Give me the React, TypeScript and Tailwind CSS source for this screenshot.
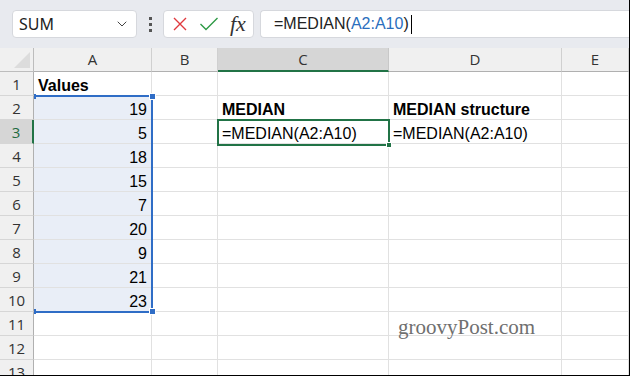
import { ChevronDown } from "lucide-react";

const COLS = ["A", "B", "C", "D", "E"];
const ROWS = Array.from({ length: 13 }, (_, i) => i + 1);
const VALUES = [19, 5, 18, 15, 7, 20, 9, 21, 23];

const cellFont = { fontFamily: '"Liberation Sans", Arial, sans-serif' };

type Cell = { text: string; bold?: boolean; right?: boolean };

const getCell = (row: number, col: string): Cell | null => {
  if (col === "A" && row === 1) return { text: "Values", bold: true };
  if (col === "A" && row >= 2 && row <= 10)
    return { text: `${VALUES[row - 2]}`, right: true };
  if (col === "C" && row === 2) return { text: "MEDIAN", bold: true };
  if (col === "D" && row === 2) return { text: "MEDIAN structure", bold: true };
  if ((col === "C" || col === "D") && row === 3)
    return { text: "=MEDIAN(A2:A10)" };
  return null;
};

const Toolbar = () => (
  <div
    className="flex h-[48px] items-center gap-0 bg-[#e8eaef] pl-[12px]"
    style={{ fontFamily: '"Noto Sans", "Open Sans", sans-serif' }}
  >
    <div className="flex h-[28px] w-[125px] items-center justify-between rounded-[4px] border border-[#d6d8dd] bg-white pl-[6px] pr-[6px] text-[16px] text-[#222]">
      <span>SUM</span>
      <ChevronDown className="h-[16px] w-[16px] text-[#444]" strokeWidth={1.5} />
    </div>
    <div className="flex w-[26px] flex-col items-center gap-[3px]">
      <span className="h-[3px] w-[3px] bg-[#555]" />
      <span className="h-[3px] w-[3px] bg-[#555]" />
      <span className="h-[3px] w-[3px] bg-[#555]" />
    </div>
    <div className="flex h-[28px] w-[91px] items-center gap-[11px] rounded-[4px] border border-[#d6d8dd] bg-white pl-[8px]">
      <svg width="16" height="16" viewBox="0 0 16 16">
        <path d="M2 2 L14 14 M14 2 L2 14" stroke="#e0393e" strokeWidth="1.4" fill="none" />
      </svg>
      <svg width="20" height="16" viewBox="0 0 20 16">
        <path d="M1.5 8 L7 13.5 L18.5 2" stroke="#2e9a46" strokeWidth="1.4" fill="none" />
      </svg>
      <span
        className="text-[22px] italic leading-none text-[#333]"
        style={{ fontFamily: '"Liberation Serif", "Times New Roman", serif' }}
      >
        fx
      </span>
    </div>
    <div
      className="ml-[6px] flex h-[28px] flex-1 items-center rounded-l-[4px] border border-r-0 border-[#d6d8dd] bg-white pl-[13px] text-[16px] text-[#222]"
      style={cellFont}
    >
      <span>=MEDIAN(</span>
      <span className="text-[#2a6ebd]">A2:A10</span>
      <span>)</span>
      <span className="ml-[2px] h-[19px] w-[1px] bg-black" />
    </div>
  </div>
);

const App = () => {
  return (
    <div className="relative h-[376px] w-[630px] overflow-hidden border-r border-b border-black bg-white">
      <Toolbar />
      <div
        className="relative grid grid-cols-[34px_118px_66px_171px_173px_1fr] grid-rows-[24px_repeat(13,24px)]"
        style={cellFont}
      >
        {/* header row */}
        <div className="relative border-r border-b border-[#bdbdbd] bg-[#f0f0f0]">
          <div className="absolute right-[3px] bottom-[3px] h-0 w-0 border-r-[16px] border-t-[16px] border-t-transparent border-r-[#dcdcdc]" />
        </div>
        {COLS.map((c) => (
          <div
            key={c}
            className={`flex items-center justify-center border-r text-[#333] ${
              c === "C"
                ? "border-b-2 border-r-[#c8c8c8] border-b-[#217346] bg-[#d6d6d6] text-[#1e6b3f]"
                : "border-b border-[#d0d0d0] border-b-[#b0b0b0] bg-[#f0f0f0]"
            }`}
            style={{ fontFamily: '"Open Sans", "Noto Sans", sans-serif', fontSize: 15 }}
          >
            {c}
          </div>
        ))}

        {ROWS.map((r) => (
          <div key={r} className="contents">
            <div
              className={`flex items-center justify-center border-b border-[#d6d6d6] pt-[2px] text-[15px] ${
                r === 3
                  ? "border-r-2 border-r-[#217346] bg-[#d6d6d6] text-[#1e6b3f]"
                  : "border-r border-r-[#b0b0b0] bg-[#f0f0f0] text-[#333]"
              }`}
              style={{ fontFamily: '"Open Sans", "Noto Sans", sans-serif' }}
            >
              {r}
            </div>
            {COLS.map((c) => {
              const cell = getCell(r, c);
              const inRange = c === "A" && r >= 2 && r <= 10;
              return (
                <div
                  key={c}
                  className={`flex items-end overflow-visible whitespace-nowrap border-r border-b border-[#e1e1e1] px-[4px] text-[16px] leading-[18px] text-black ${
                    inRange ? "bg-[#e9eef7]" : ""
                  } ${cell?.right ? "justify-end" : ""} ${cell?.bold ? "font-bold" : ""}`}
                >
                  {cell?.text}
                </div>
              );
            })}
          </div>
        ))}

        {/* selected range A2:A10 */}
        <div className="pointer-events-none absolute top-[47px] left-[34px] h-[218px] w-[119px] border-2 border-l-0 border-[#2f6dc6]">
          <span className="absolute -top-[4px] -right-[5px] h-[7px] w-[7px] border border-white bg-[#2f6dc6]" />
          <span className="absolute -bottom-[4px] -right-[5px] h-[7px] w-[7px] border border-white bg-[#2f6dc6]" />
          <span className="absolute -top-[3px] left-0 h-[5px] w-[2px] bg-[#2f6dc6]" />
          <span className="absolute -bottom-[3px] left-0 h-[5px] w-[2px] bg-[#2f6dc6]" />
        </div>

        {/* active cell C3 */}
        <div className="pointer-events-none absolute top-[71px] left-[217px] h-[27px] w-[173px] border-2 border-[#217346]">
          <span className="absolute -right-[4px] -bottom-[4px] h-[6px] w-[6px] border border-white bg-[#217346]" />
        </div>

        <div
          className="pointer-events-none absolute top-[264px] left-[398px] text-[21px] text-[#6f6f6f]"
          style={{ fontFamily: '"Liberation Serif", "Times New Roman", serif' }}
        >
          groovyPost.com
        </div>
      </div>
    </div>
  );
};

export default App;
